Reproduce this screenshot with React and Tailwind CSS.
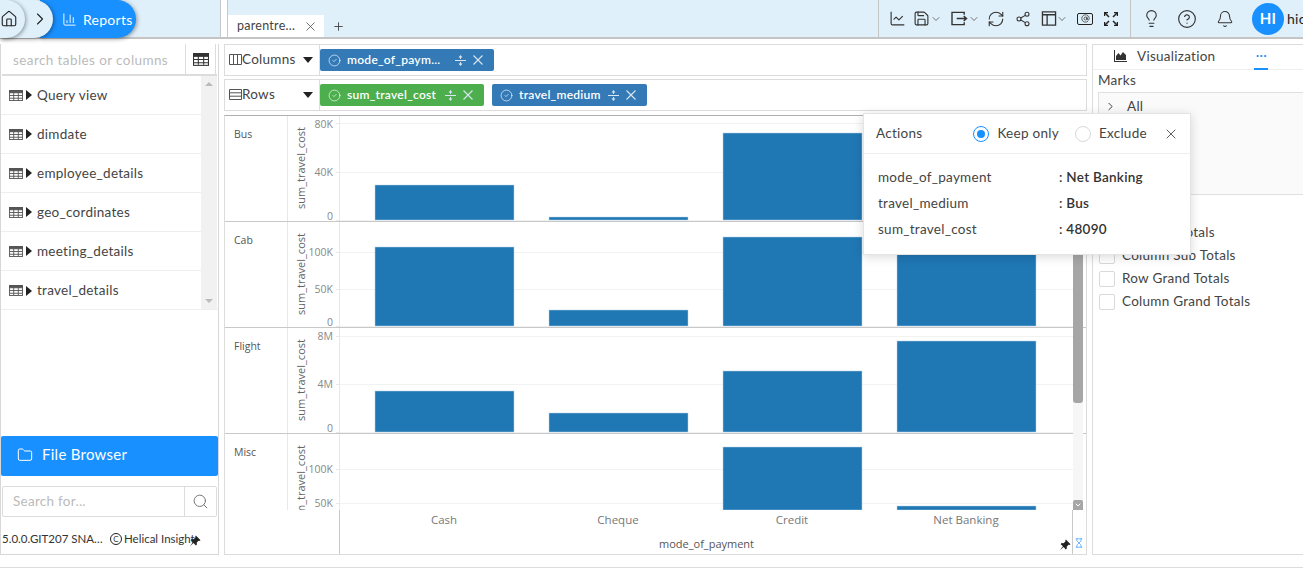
import {
  House, ChevronRight, ChevronDown, ChartColumn, X, Plus, ChartLine, Save, RefreshCw, Share2,
  Lightbulb, CircleHelp, Bell, Search, Folder, AtSign, CircleCheck, Hourglass,
} from "lucide-react";

const tables = ["Query view", "dimdate", "employee_details", "geo_cordinates", "meeting_details", "travel_details"];

const barX = [35, 209, 383, 557];

const rows = [
  { name: "Bus", height: 106, ticks: [["80K", 7, 12], ["40K", 56, 60], ["0", 104, 104]], bars: [[69, 35], [101, 3], [17, 87], [56, 48]] },
  { name: "Cab", height: 106, ticks: [["100K", 30, 34], ["50K", 67, 71], ["0", 104, 104]], bars: [[25, 79], [88, 16], [15, 89], [18, 86]] },
  { name: "Flight", height: 106, ticks: [["8M", 8, 12], ["4M", 56, 60], ["0", 104, 104]], bars: [[63, 41], [85, 19], [43, 61], [13, 91]] },
  { name: "Misc", height: 76, ticks: [["100K", 35, 39], ["50K", 69, 73]], bars: [[13, 63, 2], [72, 4, 3]], last: true },
];

function TableIcon({ className }) {
  return (
    <svg viewBox="0 0 15 12" className={className} fill="none" stroke="currentColor">
      <rect x="0.5" y="0.5" width="14" height="11" />
      <rect x="0.5" y="0.5" width="14" height="2.5" fill="currentColor" />
      <path d="M0.5 6h14M0.5 9h14M5 1v10M10 1v10" />
    </svg>
  );
}

function Caret() {
  return <span className="w-0 h-0 border-y-[5px] border-y-transparent border-l-[6px] border-l-[#222]"></span>;
}

function PinIcon({ className }) {
  return (
    <svg viewBox="0 0 14 14" className={className} fill="#222">
      <path d="M8 0.5l5.5 5.5-1.5 1-1-.4-2 2.4.2 2.2-1.2 1-2.6-2.8L1 13l3.6-4.4L2 6l1-1.2 2.2.2 2.4-2-.4-1z" />
    </svg>
  );
}

function Chip({ color, label, width }) {
  return (
    <div className={`flex items-center h-[22px] pl-[8px] pr-[11px] rounded-[2px] text-white text-[12px] font-semibold ${color} ${width}`}>
      <CircleCheck size={13} strokeWidth={1.2} className="mr-[6px] shrink-0" />
      <span className="truncate pb-[1px]">{label}</span>
      <span className="ml-auto flex items-center gap-[7px] shrink-0 text-[#dbe7f0]">
        <svg viewBox="0 0 11 11" className="w-[11px] h-[11px]" fill="currentColor">
          <path d="M0 5h11v1H0zM5.5 0l2 2.5H6V4H5V2.5H3.5zM5.5 11l2-2.5H6V7H5v1.5H3.5z" />
        </svg>
        <svg viewBox="0 0 10 10" className="w-[10px] h-[10px]" fill="none" stroke="currentColor" strokeWidth="1.1">
          <path d="M0.5 0.5l9 9M9.5 0.5l-9 9" />
        </svg>
      </span>
    </div>
  );
}

function ChartRow({ row }) {
  return (
    <div className={`flex shrink-0 overflow-hidden ${row.last ? "" : "border-b border-[#c8c8c8]"}`} style={{ height: row.height }}>
      <div className="w-[63px] shrink-0 border-r border-[#e8e8e8] pl-[9px] pt-[11px] text-[10.5px] text-[#555] tracking-normal font-['Open_Sans',sans-serif]">
        {row.name}
      </div>
      <svg width="785" height={row.height} className="shrink-0 font-['Open_Sans',sans-serif] tracking-normal">
        <line x1="51.5" y1="0" x2="51.5" y2={row.height} stroke="#e8e8e8" />
        <text transform="translate(17,52) rotate(-90)" textAnchor="middle" fontSize="11" fill="#666">
          sum_travel_cost
        </text>
        {row.ticks.map(([label, y, textY]) => (
          <g key={label}>
            <text x="45" y={textY} textAnchor="end" fontSize="10.5" fill="#888">{label}</text>
            <line x1="48" y1={y + 0.5} x2="52" y2={y + 0.5} stroke="#e8e8e8" />
            <line x1="52" y1={y + 0.5} x2="785" y2={y + 0.5} stroke="#f2f2f2" />
          </g>
        ))}
        {row.bars.map(([top, h, col], i) => (
          <rect key={i} x={barX[col ?? i] + 52} y={top} width="139" height={h} fill="#1f77b4" stroke="#b7d3ea" strokeWidth="0.5" />
        ))}
      </svg>
    </div>
  );
}

function Check({ label }) {
  return (
    <div className="flex items-center h-[23px] gap-[7px]">
      <span className="w-[16px] h-[16px] border border-[#d9d9d9] rounded-[2px] bg-white shrink-0"></span>
      <span>{label}</span>
    </div>
  );
}

export default function App() {
  return (
    <div className="relative h-[569px] w-[1303px] overflow-hidden bg-white text-[#444] text-[13.5px] tracking-[0.02em] font-[Lato,sans-serif]">

      {/* Header */}
      <div className="flex h-[39px] border-b-2 border-[#c4c4c4]">
        <div className="flex w-[221px] shrink-0 bg-[#e0f0fa] border-r border-[#c8c8c8]">
          <div className="relative z-20 flex items-center justify-end pr-[7px] w-[25px] h-[38px] rounded-r-full bg-[#e0f0fa] shadow-[1px_1px_4px_rgba(0,0,0,0.4)] overflow-hidden">
            <House size={18} strokeWidth={1.5} className="text-[#222] shrink-0" />
          </div>
          <div className="relative z-10 flex items-center justify-end w-[53px] -ml-[25px] pr-[3px] h-[38px] rounded-r-full bg-[#e0f0fa] shadow-[1px_1px_4px_rgba(0,0,0,0.4)]">
            <ChevronRight size={20} strokeWidth={1.3} className="text-[#222]" />
          </div>
          <div className="flex items-center gap-[6px] w-[96px] -ml-[13px] pl-[22px] h-[38px] rounded-r-full bg-[#1890ff] text-white text-[14px] shadow-[1px_1px_4px_rgba(0,0,0,0.4)]">
            <ChartColumn size={15} strokeWidth={1.5} />
            <span>Reports</span>
          </div>
        </div>
        <div className="w-[6px] shrink-0 bg-white"></div>
        <div className="flex flex-1 bg-[#e0f0fa] border-l border-[#c8c8c8]">
          <div className="self-end flex items-center w-[96px] h-[22px] bg-white pl-[9px] pr-[6px] text-[12.5px] text-[#444]">
            <span>parentre...</span>
            <X size={15} strokeWidth={1.2} className="ml-auto" />
          </div>
          <Plus size={13} strokeWidth={1.5} className="ml-[8px] mt-[20px] text-[#333]" />
          <div className="flex items-center ml-auto text-[#333]">
            <div className="flex items-center h-full border-l border-[#c4c4c4] pl-[10px] w-[252px]">
              <ChartLine size={17} strokeWidth={1.6} />
              <Save size={17} strokeWidth={1.6} className="ml-[7px]" />
              <ChevronDown size={12} strokeWidth={1.3} />
              <svg viewBox="0 0 18 16" className="w-[17px] h-[15px] ml-[9px]" fill="none" stroke="currentColor" strokeWidth="1.5">
                <path d="M14 4V1.5H1v13h13V12M6 8h10M13.5 5.5L16.5 8l-3 2.5" />
              </svg>
              <ChevronDown size={12} strokeWidth={1.3} />
              <RefreshCw size={18} strokeWidth={1.5} className="ml-[7px]" />
              <Share2 size={16} strokeWidth={1.6} className="ml-[10px]" />
              <svg viewBox="0 0 16 16" className="w-[16px] h-[15px] ml-[10px]" fill="none" stroke="currentColor" strokeWidth="1.4">
                <path d="M1 1h14v14H1zM1 4h14M6 4v11" />
              </svg>
              <ChevronDown size={12} strokeWidth={1.3} className="-ml-[1px]" />
              <div className="flex items-center justify-center w-[16px] h-[12px] ml-[9px] border-[1.5px] border-[#222] rounded-[2px]">
                <AtSign size={9} strokeWidth={2} />
              </div>
              <svg viewBox="0 0 14 14" className="w-[14px] h-[14px] ml-[11px]" fill="none" stroke="#222" strokeWidth="1.5">
                <path d="M1 1l4 4M13 1L9 5M1 13l4-4M13 13L9 9" />
                <path d="M0.5 4V0.5H4M10 0.5h3.5V4M0.5 10v3.5H4M10 13.5h3.5V10" />
              </svg>
            </div>
            <div className="flex items-center h-full border-l border-[#c4c4c4] w-[173px] pl-[11px]">
              <Lightbulb size={19} strokeWidth={1.4} />
              <CircleHelp size={20} strokeWidth={1.4} className="ml-[16px]" />
              <Bell size={18} strokeWidth={1.4} className="ml-[19px]" />
              <div className="flex items-center justify-center w-[32px] h-[32px] ml-[18px] rounded-full bg-[#1890ff] text-white text-[15px] font-bold">HI</div>
              <span className="ml-[3px] w-[16px] overflow-hidden text-[14px] text-[#222]">hic</span>
            </div>
          </div>
        </div>
      </div>

      <div className="flex h-[528px]">

        {/* Left panel */}
        <div className="flex flex-col w-[219px] shrink-0 mt-[5px] border-x border-b border-[#d8d8d8] h-[511px]">
          <div className="flex h-[32px] ml-[1px] mr-[1px] border-b-2 border-[#dcdcdc]">
            <div className="flex items-center w-[184px] pl-[11px] pt-[2px] border-r border-[#dcdcdc] text-[#bbb] tracking-[0.03em]">search tables or columns</div>
            <div className="flex items-center justify-center w-[30px] border-r border-[#dcdcdc]">
              <TableIcon className="w-[16px] h-[13px] text-[#333]" />
            </div>
          </div>
          <div className="flex h-[234px] border-b border-[#eee]">
            <div className="flex-1">
              {tables.map((t) => (
                <div key={t} className="flex items-center gap-[3px] h-[39px] pl-[8px] border-b border-[#eee] last:border-b-0 text-[#444]">
                  <TableIcon className="w-[14px] h-[11px] text-[#555]" />
                  <Caret />
                  <span className="ml-[2px]">{t}</span>
                </div>
              ))}
            </div>
            <div className="flex flex-col justify-between items-center w-[16px] mr-[1px] py-[6px] bg-[#f1f1f1]">
              <span className="w-0 h-0 border-x-[4px] border-x-transparent border-b-[4px] border-b-[#bbb]"></span>
              <span className="w-0 h-0 border-x-[4px] border-x-transparent border-t-[4px] border-t-[#bbb]"></span>
            </div>
          </div>
          <div className="flex-1"></div>
          <div className="flex items-center gap-[9px] h-[40px] pl-[16px] pb-[3px] bg-[#1890ff] text-white text-[15px] rounded-[2px]">
            <Folder size={16} strokeWidth={1.5} />
            <span>File Browser</span>
          </div>
          <div className="flex h-[31px] mt-[10px] mx-[1px] border border-[#dcdcdc] rounded-[2px]">
            <div className="flex items-center flex-1 pl-[10px] border-r border-[#dcdcdc] text-[#bbb]">Search for...</div>
            <div className="flex items-center justify-center w-[31px]">
              <Search size={17} strokeWidth={1.4} className="text-[#777]" />
            </div>
          </div>
          <div className="flex items-center h-[37px] pt-[6px] pl-[1px] text-[11.5px] text-[#333] tracking-normal whitespace-nowrap">
            <span className="w-[102px] mr-[6px] truncate">5.0.0.GIT207 SNAPSHOT</span>
            <span className="flex items-center justify-center w-[12px] h-[12px] border border-[#222] rounded-full text-[8px]">C</span>
            <span className="ml-[2px]">Helical Insight</span>
            <PinIcon className="w-[12px] h-[12px] mt-[4px] -ml-[6px] shrink-0" />
          </div>
        </div>

        {/* Center */}
        <div className="flex flex-col w-[863px] shrink-0 ml-[5px] mt-[5px]">
          <div className="flex h-[32px] border border-[#dcdcdc] shrink-0">
            <div className="flex items-center w-[95px] pl-[4px] pb-[1px] border-r border-[#dcdcdc]">
              <svg viewBox="0 0 13 11" className="w-[13px] h-[11px] text-[#555]" fill="none" stroke="currentColor">
                <path d="M0.5 0.5h12v10H0.5zM4.5 1v9M8.5 1v9" />
              </svg>
              <span>Columns</span>
              <span className="ml-auto mr-[6px] w-0 h-0 border-x-[5px] border-x-transparent border-t-[6px] border-t-[#222]"></span>
            </div>
            <div className="flex items-center">
              <Chip color="bg-[#337ab7]" label="mode_of_paym..." width="w-[174px]" />
            </div>
          </div>
          <div className="flex h-[32px] mt-[3px] border border-[#dcdcdc] shrink-0">
            <div className="flex items-center w-[95px] pl-[4px] pb-[1px] border-r border-[#dcdcdc]">
              <svg viewBox="0 0 13 11" className="w-[13px] h-[11px] text-[#555]" fill="none" stroke="currentColor">
                <path d="M0.5 0.5h12v10H0.5zM1 3.8h11M1 7.2h11" />
              </svg>
              <span>Rows</span>
              <span className="ml-auto mr-[6px] w-0 h-0 border-x-[5px] border-x-transparent border-t-[6px] border-t-[#222]"></span>
            </div>
            <div className="flex items-center gap-[8px]">
              <Chip color="bg-[#4cae4c]" label="sum_travel_cost" width="w-[164px]" />
              <Chip color="bg-[#337ab7]" label="travel_medium" width="w-[155px]" />
            </div>
          </div>

          {/* Chart */}
          <div className="relative flex flex-col h-[440px] mt-[4px] border border-[#dcdcdc] border-t-[#b0b0b0] overflow-hidden">
            {rows.map((row) => (
              <ChartRow key={row.name} row={row} />
            ))}
            <div className="flex flex-1 font-['Open_Sans',sans-serif] tracking-normal text-[11.5px]">
              <div className="w-[115px] shrink-0 border-r border-[#c8c8c8]"></div>
              <div className="flex-1 min-w-0">
                <div className="flex pl-[17px] pt-[1px] text-[#777]">
                  <span className="w-[174px] text-center">Cash</span>
                  <span className="w-[174px] text-center">Cheque</span>
                  <span className="w-[174px] text-center">Credit</span>
                  <span className="w-[174px] text-center">Net Banking</span>
                </div>
                <div className="flex items-center mt-[8px] pl-[319px] pr-[1px] text-[11px] text-[#555]">
                  <span>mode_of_payment</span>
                  <PinIcon className="ml-auto w-[12px] h-[12px]" />
                </div>
              </div>
              <div className="flex items-end w-[14px] pb-[6px] pl-[1px] shrink-0 border-l border-[#c8c8c8]">
                <Hourglass size={10} strokeWidth={1.5} className="text-[#1890ff]" />
              </div>
            </div>
            {/* scrollbar lies over the chart */}
            <div className="absolute right-[3px] top-0 w-[10px] h-[394px] bg-[#f6f6f6]">
              <div className="w-full h-[287px] bg-[#a6a6a6] rounded-b-[3px]"></div>
              <div className="absolute bottom-0 flex items-center justify-center w-full h-[10px] bg-[#a6a6a6] rounded-t-[2px]">
                <ChevronDown size={8} strokeWidth={3} className="text-white" />
              </div>
            </div>
          </div>
        </div>

        {/* Right panel */}
        <div className="flex-1 ml-[5px] mt-[5px] border-l border-t border-b border-[#dcdcdc] h-[511px]">
          <div className="flex items-center h-[25px] border-b border-[#eee]">
            <svg viewBox="0 0 13 12" className="w-[13px] h-[12px] ml-[21px] mb-[2px]" fill="#333">
              <path d="M0 0h1v11h12v1H0z" />
              <path d="M2 10V6l2.5-3 2 2.5L9 2l3 3v5z" />
            </svg>
            <span className="ml-[10px] pb-[2px]">Visualization</span>
            <span className="flex justify-center items-center ml-[39px] w-[14px] h-[25px] pb-[2px] text-[#1890ff] border-b-2 border-[#1890ff]">···</span>
          </div>
          <div className="pl-[5px] pt-[1px] leading-[19px]">Marks</div>
          <div className="flex flex-col ml-[5px] mt-[2px] h-[103px] border border-[#e0e0e0] border-r-0 bg-[#fafafa]">
            <div className="flex items-center gap-[10px] h-[27px] pl-[5px]">
              <ChevronRight size={13} strokeWidth={1.6} className="text-[#222]" />
              <span>All</span>
            </div>
          </div>
          <div className="pl-[6px] pt-[26px]">
            <Check label="Row Sub Totals" />
            <Check label="Column Sub Totals" />
            <Check label="Row Grand Totals" />
            <Check label="Column Grand Totals" />
          </div>
        </div>
      </div>

      {/* Actions popover */}
      <div className="absolute left-[863px] top-[113px] w-[328px] h-[142px] bg-white border border-[#e4e4e4] shadow-[0_2px_10px_rgba(0,0,0,0.15)]">
        <div className="flex items-center h-[40px] pl-[12px] pr-[11px] border-b border-[#eee]">
          <span>Actions</span>
          <span className="ml-[51px] flex items-center justify-center w-[16px] h-[16px] rounded-full border border-[#1890ff]">
            <span className="w-[8px] h-[8px] rounded-full bg-[#1890ff]"></span>
          </span>
          <span className="ml-[8px]">Keep only</span>
          <span className="ml-[16px] w-[16px] h-[16px] rounded-full border border-[#d9d9d9]"></span>
          <span className="ml-[8px]">Exclude</span>
          <X size={16} strokeWidth={1.2} className="ml-auto text-[#333]" />
        </div>
        <div className="pl-[14px] pt-[10px]">
          {[["mode_of_payment", ": Net Banking"], ["travel_medium", ": Bus"], ["sum_travel_cost", ": 48090"]].map(([k, v]) => (
            <div key={k} className="flex items-center h-[26px]">
              <span className="w-[181px]">{k}</span>
              <span className="font-semibold text-[#333]">{v}</span>
            </div>
          ))}
        </div>
      </div>

      {/* bottom rule */}
      <div className="absolute left-0 right-0 bottom-[1px] h-px bg-[#dcdcdc]"></div>
    </div>
  );
}
